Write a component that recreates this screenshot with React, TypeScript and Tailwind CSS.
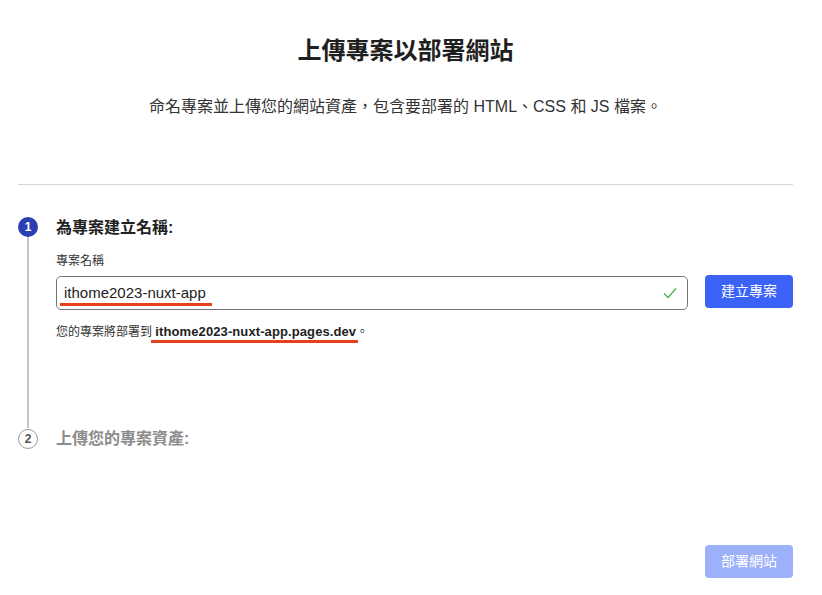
export default function App() {
  return (
    <div className="w-[822px] h-[595px] bg-white font-['Liberation_Sans','Noto_Sans_CJK_TC',sans-serif] text-[#222]">
      <div className="ml-[18px] w-[775px] pt-[35px] text-center">
        <h1 className="text-[24px] leading-[32px] font-bold text-[#1f1f1f]">上傳專案以部署網站</h1>
        <p className="mt-[29px] text-[16px] leading-[22px] text-[#333]">
          命名專案並上傳您的網站資產，包含要部署的 HTML、CSS 和 JS 檔案。
        </p>
      </div>

      <div className="ml-[18px] w-[775px] mt-[66px] border-t border-[#d6d6d6]" />

      <div className="ml-[18px] w-[775px] mt-[32px]">
        {/* step 1 */}
        <div className="flex h-[211px]">
          <div className="w-[20px] flex flex-col items-center">
            <div className="w-[20px] h-[20px] rounded-full bg-[#2b3fb3] text-white text-[12px] font-bold flex items-center justify-center">
              1
            </div>
            <div className="w-[2px] flex-1 bg-[#c4c4c4]" />
          </div>
          <div className="ml-[18px] flex-1">
            <h2 className="text-[16px] leading-[22px] font-bold text-[#222]">為專案建立名稱:</h2>
            <div className="mt-[14px] text-[12px] leading-[16px] text-[#333]">專案名稱</div>
            <div className="mt-[7px] flex items-start gap-[17px]">
              <div className="relative w-[632px] h-[34px] rounded-[5px] border border-[#737373] flex items-center pl-[7px] pr-[10px]">
                <span className="relative text-[15px] text-[#222]">
                  ithome2023-nuxt-app
                  <span className="absolute left-[-4px] right-[-6px] top-[21px] h-[3px] bg-[#e5411d]" />
                </span>
                <svg className="ml-auto" width="14" height="12" viewBox="0 0 14 12" fill="none">
                  <path d="M1 6.5 L5 10.5 L13 1.5" stroke="#4caf50" strokeWidth="1.3" />
                </svg>
              </div>
              <button className="w-[88px] h-[33px] -mt-[1px] rounded-[4px] bg-[#3b63f8] text-white text-[14px]">
                建立專案
              </button>
            </div>
            <div className="mt-[14px] text-[12px] leading-[16px] text-[#333]">
              您的專案將部署到{" "}
              <span className="relative text-[13px] tracking-[0.1px] font-bold text-[#222]">
                ithome2023-nuxt-app.pages.dev
                <span className="absolute left-[-4px] right-[-2px] top-[16px] h-[3px] bg-[#e5411d]" />
              </span>
              。
            </div>
          </div>
        </div>

        {/* step 2 */}
        <div className="flex items-center">
          <div className="w-[20px] h-[20px] rounded-full border border-[#9a9a9a] text-[#555] text-[12px] font-bold flex items-center justify-center">
            2
          </div>
          <h2 className="ml-[18px] text-[16px] leading-[22px] font-bold text-[#8c8c8c]">上傳您的專案資產:</h2>
        </div>

        <div className="mt-[95px] flex justify-end">
          <button className="w-[88px] h-[33px] rounded-[4px] bg-[#9db1fb] text-white text-[14px]">部署網站</button>
        </div>
      </div>
    </div>
  );
}
